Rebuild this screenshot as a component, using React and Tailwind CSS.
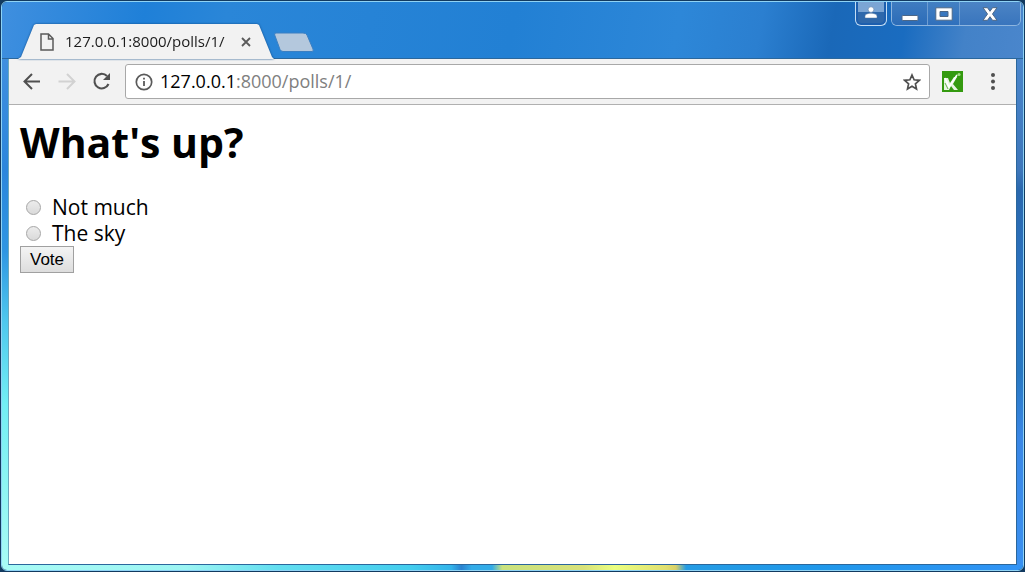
import { useState } from "react"

const choices = [
  { id: 1, text: "Not much" },
  { id: 2, text: "The sky" },
]

function WindowControls() {
  return (
    <div className="flex items-start gap-1 pr-0.5">
      <button
        type="button"
        aria-label="Profile"
        className="flex h-6 w-8 rounded-b-md border border-t-0 border-[#c3ddf4] bg-[#1d5fae] p-0.5 pt-0"
      >
        <span className="flex h-full w-full items-center justify-center rounded-b-sm bg-gradient-to-b from-[#7ba5d4] from-50% to-[#2e68ab] to-50%">
          <svg viewBox="0 0 14 13" className="h-[13px] w-3.5" fill="#fff" stroke="#54779f" strokeWidth="0.5">
            <circle cx="7" cy="3.6" r="2.8" />
            <path d="M1 12v-1.800C1 8.200 4 7.300 7 7.300s6 .9 6 2.900V12z" />
          </svg>
        </span>
      </button>
      <div className="flex h-6 overflow-hidden rounded-b-md border border-t-0 border-[#8db5df]">
        <button
          type="button"
          aria-label="Minimize"
          className="flex w-9 items-center justify-center border-r border-[#6d9dd2] bg-gradient-to-b from-[#3f7cc0] to-[#2b6cb8]"
        >
          <svg viewBox="0 0 18 14" className="h-3.5 w-4.5">
            <rect x="1" y="8.500" width="16" height="5" rx="1" fill="#fff" stroke="#4c6787" />
          </svg>
        </button>
        <button
          type="button"
          aria-label="Maximize"
          className="flex w-8 items-center justify-center border-r border-[#6d9dd2] bg-gradient-to-b from-[#4380c3] to-[#2f70bc]"
        >
          <svg viewBox="0 0 18 14" className="h-3.5 w-4.5">
            <path
              fillRule="evenodd"
              d="M.8.800h16.400v12.400H.8zM5 4.500v5h8v-5z"
              fill="#fff"
              stroke="#4c6787"
            />
          </svg>
        </button>
        <button
          type="button"
          aria-label="Close window"
          className="flex w-15 items-center justify-center bg-gradient-to-b from-[#4b84c5] to-[#3975bd]"
        >
          <svg viewBox="0 0 16 14" className="h-3.5 w-4">
            <path
              d="M1 .700h4.500L8 4.300 10.500.700H15L10.500 7l4.500 6.300h-4.500L8 9.700l-2.500 3.600H1L5.500 7z"
              fill="#fff"
              stroke="#4c6787"
            />
          </svg>
        </button>
      </div>
    </div>
  )
}

function TitleBar() {
  return (
    <header className="flex h-[57px] items-start justify-between bg-[linear-gradient(100deg,#3f8fdf_0%,#1f80d8_14%,#2a86d8_22%,#2280d4_50%,#2d87d8_66%,#2b7fd0_74%,#1a68b8_81%,#1a6cc0_88%,#4382c8_94%,#4a86cc_100%)] pl-4 shadow-[inset_0_-1px_#2b679c]">
      <div className="flex h-[57px] items-end">
        <div className="drop-shadow-[0_0_1px_#104a86]">
          <div className="flex h-[35px] w-64 items-center bg-[#f2f2f2] pl-[22px] [clip-path:polygon(0_100%,3px_94%,16px_3%,18px_0,239px_0,241px_3%,254px_94%,100%_100%)]">
            <svg viewBox="0 0 14 18" className="mr-[11px] h-[18px] w-3.5" fill="none" stroke="#5a5a5a" strokeWidth="1.500">
              <path d="M1 1h7.500l4.500 4.500V17H1zM8.500 1v5h4.500" />
            </svg>
            <span className="w-[170px] whitespace-nowrap text-[15px] text-[#1c1c1c]">
              127.0.0.1:8000/polls/1/
            </span>
            <button type="button" aria-label="Close tab" className="ml-1.5">
              <svg viewBox="0 0 10 10" className="h-2.5 w-2.5" stroke="#5a5a5a" strokeWidth="1.800">
                <path d="M1 1l8 8M9 1l-8 8" />
              </svg>
            </button>
          </div>
        </div>
        <button type="button" aria-label="New tab" className="mb-1.5">
          <svg viewBox="0 0 42 21" className="h-[21px] w-[42px]">
            <path
              d="M2 1h27q3 0 4 2l6 14q1 2.500-1 2.500H9q-2 0-3-2L.7 3Q0 1 2 1z"
              fill="#b4c8dd"
              stroke="#3b7fc2"
            />
          </svg>
        </button>
      </div>
      <WindowControls />
    </header>
  )
}

function Toolbar() {
  return (
    <div className="flex h-[46px] items-center border-b border-[#b0b0b0] bg-[#f2f2f2] pl-[13px]">
      <button type="button" aria-label="Back" className="mr-[15px]">
        <svg viewBox="0 0 20 20" className="h-5 w-5" fill="none" stroke="#505050" strokeWidth="2">
          <path d="M18 9.500H3M10 2L2.500 9.500 10 17" />
        </svg>
      </button>
      <button type="button" aria-label="Forward" disabled className="mr-[15px]">
        <svg viewBox="0 0 20 20" className="h-5 w-5" fill="none" stroke="#d2d2d2" strokeWidth="2">
          <path d="M1.500 9.500H17M10 2l7.500 7.500L10 17" />
        </svg>
      </button>
      <button type="button" aria-label="Reload" className="mr-[13px]">
        <svg viewBox="0 0 20 20" className="h-5 w-5">
          <path d="M16.500 12A7.300 7.300 0 1 1 15 4" fill="none" stroke="#505050" strokeWidth="2.100" />
          <path d="M18 1v7h-7z" fill="#505050" />
        </svg>
      </button>
      <div className="flex h-[35px] min-w-0 flex-1 items-center rounded-[3px] border border-[#a8a8a8] bg-white px-2">
        <svg viewBox="0 0 20 20" className="mr-1.5 h-5 w-5 shrink-0" fill="none" stroke="#5a5a5a">
          <circle cx="10" cy="10" r="7.700" strokeWidth="1.700" />
          <path d="M10 9v5M10 5.800v1.800" strokeWidth="1.800" />
        </svg>
        <a href="#poll" className="flex-1 pb-0.5 whitespace-nowrap text-lg text-[#808080]">
          <span className="text-black">127.0.0.1</span>:8000/polls/1/
        </a>
        <button type="button" aria-label="Bookmark this page">
          <svg viewBox="0 0 18 18" className="h-[18px] w-[18px]" fill="none" stroke="#505050" strokeWidth="1.700">
            <path d="M9 2l2.100 4.800 5.200.5-3.900 3.500 1.100 5.100L9 13.200l-4.500 2.700 1.100-5.100-3.900-3.500 5.200-.5z" />
          </svg>
        </button>
      </div>
      <button type="button" aria-label="Extension" className="ml-3">
        <svg viewBox="0 0 21 21" className="h-[21px] w-[21px]">
          <path d="M0 0h21v21H0z" fill="#349a10" />
          <path d="M2 7h4l2 5 4-6h3l-4 7 5 6h-4l-3-4-2 4H2z" fill="#e7f5e2" />
          <path d="M3 7l4 9 8-12" fill="none" stroke="#fff" strokeWidth="1.600" />
          <path d="M3 12l3 6" fill="none" stroke="#68b44d" />
          <circle cx="17" cy="3.500" r="1.600" fill="#a3db86" />
        </svg>
      </button>
      <button type="button" aria-label="Menu" className="mr-5 ml-[27px]">
        <svg viewBox="0 0 6 18" className="h-[18px] w-1.5" fill="#505050">
          <circle cx="3" cy="2" r="2" />
          <circle cx="3" cy="8.500" r="2" />
          <circle cx="3" cy="15" r="2" />
        </svg>
      </button>
    </div>
  )
}

function Poll() {
  const [choice, setChoice] = useState(null)

  return (
    <main id="poll" className="flex-1 bg-white px-[11px] pt-2.5 text-[21px] text-black">
      <h1 className="mb-[25px] text-[41px] leading-[54px] font-bold">What's up?</h1>
      <form onSubmit={(e) => e.preventDefault()}>
        {choices.map((c) => (
          <div key={c.id} className="flex h-[26px] items-center">
            <input
              type="radio"
              name="choice"
              id={`choice${c.id}`}
              checked={choice === c.id}
              onChange={() => setChoice(c.id)}
              className="mr-[11px] ml-1.5 h-[15px] w-[15px] appearance-none rounded-full border border-[#a6a6a6] bg-gradient-to-b from-[#ececec] to-[#dadada] checked:border-4 checked:border-[#505050]"
            />
            <label htmlFor={`choice${c.id}`} className="leading-[26px]">
              {c.text}
            </label>
          </div>
        ))}
        <button
          type="submit"
          className="block h-[27px] border border-[#a0a0a0] bg-gradient-to-b from-[#f4f4f4] to-[#dddddd] px-[9px] font-['Liberation_Sans',sans-serif] text-[17px] leading-6"
        >
          Vote
        </button>
      </form>
    </main>
  )
}

export default function App() {
  return (
    <div className="flex min-h-screen bg-[#123a60] p-px font-['Open_Sans','Noto_Sans',sans-serif]">
      <div className="flex flex-1 flex-col overflow-hidden rounded-md border border-[#8fd3f5]">
        <TitleBar />
        <div className="flex flex-1">
          <div className="w-1.5 bg-[linear-gradient(#3f8fdf_0%,#2b86dc_22%,#2f96e2_38%,#4fc8ee_52%,#72eef4_68%,#8ff5f3_85%,#a8fbf5_100%)]" />
          <div className="flex min-w-0 flex-1 flex-col border border-t-0 border-[#2b679c] border-l-[#6aa8bd]">
            <Toolbar />
            <Poll />
          </div>
          <div className="w-1.5 bg-[linear-gradient(#4a86cc_0%,#3e77bb_22%,#2a68ae_26%,#2b74c2_45%,#2878c2_62%,#3a87e6_75%,#3a90f0_100%)]" />
        </div>
        <div className="h-[5px] bg-[linear-gradient(90deg,#a8fbf5_0%,#9cf5f3_18%,#62def0_27%,#43cdee_40%,#33b4ea_44%,#2a82d0_45%,#33ace8_46%,#33ace8_48%,#c9e27e_49%,#d8e27a_57%,#eaff80_60%,#e0e070_65%,#d8d068_66%,#259ce4_67%,#1f98ea_80%,#3193f5_100%)]" />
      </div>
    </div>
  )
}
